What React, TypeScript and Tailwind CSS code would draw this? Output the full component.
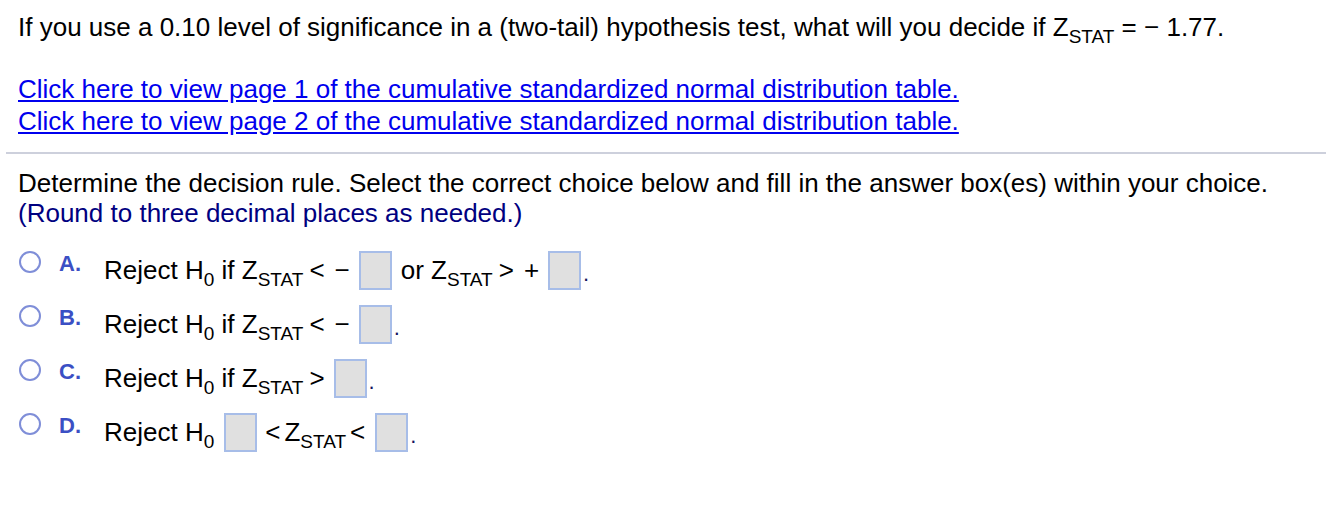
import React from "react";

const font = { fontFamily: '"Liberation Sans", Arial, Helvetica, sans-serif' };

const Sub = ({ children }: { children: React.ReactNode }) => (
  <sub className="text-[19px] bottom-[-7px]">{children}</sub>
);

const Box = ({ className = "" }: { className?: string }) => (
  <span className={"inline-block w-[33px] h-[39px] bg-[#e0e0e0] border-2 border-[#a7bde8] shrink-0 " + className} />
);

const Dot = () => <span className="text-[#14145e] text-[22px] leading-none ml-[2px] self-end mb-[12px]">.</span>;

const Option = ({ letter, children }: { letter: string; children: React.ReactNode }) => (
  <div className="flex items-start h-[54px]">
    <span className="ml-[1px] mt-[8px] w-[22px] h-[22px] rounded-full border-2 border-[#7f8ed8] bg-white shrink-0" />
    <span className="ml-[18px] w-[45px] mt-[9px] leading-[24px] text-[22px] font-bold text-[#3b4fc4]">
      {letter}.
    </span>
    <div className="flex items-center h-[54px] text-[26px] leading-[28px] text-black whitespace-pre">{children}</div>
  </div>
);

export default function App() {
  return (
    <div className="w-[1326px] h-[506px] bg-white pt-[11px]" style={font}>
      <div className="px-[18px]">
        <p className="text-[26px] leading-[32px] text-black whitespace-pre">
          If you use a 0.10 level of significance in a (two-tail) hypothesis test, what will you decide if Z<Sub>STAT</Sub> = − 1.77.
        </p>
        <div className="mt-[30px] text-[26px] leading-[32px] text-[#0000ee]">
          <div><a className="underline" href="#">Click here to view page 1 of the cumulative standardized normal distribution table.</a></div>
          <div><a className="underline" href="#">Click here to view page 2 of the cumulative standardized normal distribution table.</a></div>
        </div>
      </div>
      <div className="ml-[6px] mt-[15px] border-t-2 border-[#cdd0dc]" />
      <div className="px-[18px]">
        <div className="mt-[14px] text-[26px] leading-[30px]">
          <p className="text-black">Determine the decision rule. Select the correct choice below and fill in the answer box(es) within your choice.</p>
          <p className="text-[#000080]">(Round to three decimal places as needed.)</p>
        </div>
        <div className="mt-[15px]">
          <Option letter="A">
            <span>Reject H<Sub>0</Sub> if Z<Sub>STAT</Sub></span>
            <span className="ml-[6px]">&lt;</span>
            <span className="ml-[10px]">−</span>
            <Box className="ml-[9px]" />
            <span className="ml-[9px]">or Z<Sub>STAT</Sub></span>
            <span className="ml-[6px]">&gt;</span>
            <span className="ml-[10px]">+</span>
            <Box className="ml-[9px]" />
            <Dot />
          </Option>
          <Option letter="B">
            <span>Reject H<Sub>0</Sub> if Z<Sub>STAT</Sub></span>
            <span className="ml-[6px]">&lt;</span>
            <span className="ml-[10px]">−</span>
            <Box className="ml-[9px]" />
            <Dot />
          </Option>
          <Option letter="C">
            <span>Reject H<Sub>0</Sub> if Z<Sub>STAT</Sub></span>
            <span className="ml-[6px]">&gt;</span>
            <Box className="ml-[9px]" />
            <Dot />
          </Option>
          <Option letter="D">
            <span>Reject H<Sub>0</Sub></span>
            <Box className="ml-[10px]" />
            <span className="ml-[8px]">&lt;</span>
            <span className="ml-[4px]">Z<Sub>STAT</Sub></span>
            <span className="ml-[4px]">&lt;</span>
            <Box className="ml-[10px]" />
            <Dot />
          </Option>
        </div>
      </div>
    </div>
  );
}
